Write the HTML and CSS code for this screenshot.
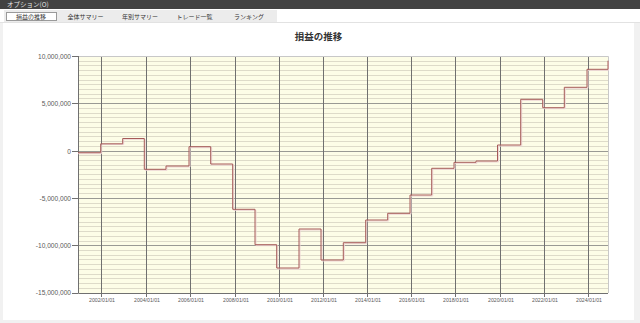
FILE: index.html
```html
<!DOCTYPE html>
<html lang="ja">
<head>
<meta charset="utf-8">
<title>損益の推移</title>
<link rel="stylesheet" href="styles.css">
</head>
<body>
<div class="titlebar">オプション(O)</div>
<div class="tabrow">
  <div class="tabstrip">
    <div class="tab active">損益の推移</div>
    <div class="tab">全体サマリー</div>
    <div class="tab">年別サマリー</div>
    <div class="tab">トレード一覧</div>
    <div class="tab">ランキング</div>
  </div>
</div>
<div class="frame">
  <div class="panel">
    <h1 class="chart-title">損益の推移</h1>
    <svg class="chart" width="631" height="276" viewBox="3 44 631 276" xmlns="http://www.w3.org/2000/svg">
      <rect x="78" y="56" width="530" height="237" fill="#fdfde7"/>
      <path fill="none" stroke="#dedbc9" stroke-width="1" d="M78 61.5H608M78 65.5H608M78 70.5H608M78 75.5H608M78 80.5H608M78 84.5H608M78 89.5H608M78 94.5H608M78 98.5H608M78 108.5H608M78 113.5H608M78 117.5H608M78 122.5H608M78 127.5H608M78 132.5H608M78 136.5H608M78 141.5H608M78 146.5H608M78 155.5H608M78 160.5H608M78 165.5H608M78 169.5H608M78 174.5H608M78 179.5H608M78 184.5H608M78 188.5H608M78 193.5H608M78 203.5H608M78 207.5H608M78 212.5H608M78 217.5H608M78 222.5H608M78 226.5H608M78 231.5H608M78 236.5H608M78 241.5H608M78 250.5H608M78 255.5H608M78 259.5H608M78 264.5H608M78 269.5H608M78 274.5H608M78 278.5H608M78 283.5H608M78 288.5H608"/>
      <path fill="none" stroke="#9a9a94" stroke-width="1" d="M78 103.5H608M78 151.5H608M78 198.5H608M78 245.5H608"/>
      <path fill="none" stroke="#707070" stroke-width="1" d="M101.5 56V297M146.5 56V297M190.5 56V297M235.5 56V297M279.5 56V297M323.5 56V297M367.5 56V297M411.5 56V297M455.5 56V297M500.5 56V297M544.5 56V297M588.5 56V297"/>
      <path fill="none" stroke="#c8c8c8" stroke-width="1" d="M78 56.5H608.5V293"/>
      <path fill="none" stroke="#707070" stroke-width="1" d="M78.5 56V293.5H608M72 56.5H78M72 103.5H78M72 151.5H78M72 198.5H78M72 245.5H78M72 293.5H78"/>
      <path fill="none" stroke="#eed6d6" stroke-width="1" d="M78 153.7H101.7V144.5H123.7V139.3H145.3V170.3H167V167H190V147.7H211.7V165H233.7V210.3H256V245.7H277.7V269H300V230H322V261H344.3V243.7H366.7V221H388.7V214.3H411V196H432.7V169.3H455V163.3H477V162H498.5V146H521.7V100.3H543.7V108.7H565.3V88.3H588V70.3H608.5V61.7"/>
      <path fill="none" stroke="#a65a58" stroke-width="1" d="M78 152.7H100.7V143.8H122.7V138.5H144.3V169.3H166V166H189V146.7H210.7V164H232.7V209.3H255V244.7H276.7V268H299V229H321V260H343.3V242.7H365.7V220H387.7V213.3H410V195H431.7V168.3H454V162.3H476V161H497.5V145H520.7V99.3H542.7V107.7H564.3V87.3H587V69.3H608V60.7"/>
      <g class="ylabels" text-anchor="end">
        <text x="71" y="58.8">10,000,000</text>
        <text x="71" y="105.8">5,000,000</text>
        <text x="71" y="153.8">0</text>
        <text x="71" y="200.8">-5,000,000</text>
        <text x="71" y="247.8">-10,000,000</text>
        <text x="71" y="295.3">-15,000,000</text>
      </g>
      <g class="xlabels" text-anchor="middle">
        <text x="102" y="301.5" textLength="26" lengthAdjust="spacingAndGlyphs">2002/01/01</text>
        <text x="147" y="301.5" textLength="26" lengthAdjust="spacingAndGlyphs">2004/01/01</text>
        <text x="191" y="301.5" textLength="26" lengthAdjust="spacingAndGlyphs">2006/01/01</text>
        <text x="236" y="301.5" textLength="26" lengthAdjust="spacingAndGlyphs">2008/01/01</text>
        <text x="280" y="301.5" textLength="26" lengthAdjust="spacingAndGlyphs">2010/01/01</text>
        <text x="324" y="301.5" textLength="26" lengthAdjust="spacingAndGlyphs">2012/01/01</text>
        <text x="368" y="301.5" textLength="26" lengthAdjust="spacingAndGlyphs">2014/01/01</text>
        <text x="412" y="301.5" textLength="26" lengthAdjust="spacingAndGlyphs">2016/01/01</text>
        <text x="456" y="301.5" textLength="26" lengthAdjust="spacingAndGlyphs">2018/01/01</text>
        <text x="501" y="301.5" textLength="26" lengthAdjust="spacingAndGlyphs">2020/01/01</text>
        <text x="545" y="301.5" textLength="26" lengthAdjust="spacingAndGlyphs">2022/01/01</text>
        <text x="589" y="301.5" textLength="26" lengthAdjust="spacingAndGlyphs">2024/01/01</text>
      </g>
    </svg>
  </div>
</div>
</body>
</html>
```

FILE: styles.css
```css
html, body {
  margin: 0;
  padding: 0;
}
body {
  width: 640px;
  height: 323px;
  overflow: hidden;
  background: #f1f1f1;
  font-family: "Noto Sans CJK JP", "Noto Sans", sans-serif;
}
.titlebar {
  height: 9px;
  line-height: 9px;
  background: #424242;
  color: #e4e4e4;
  font-size: 6.5px;
  padding-left: 7px;
  white-space: nowrap;
}
.tabrow {
  height: 13px;
  background: #ffffff;
  padding-top: 1px;
  box-sizing: border-box;
}
.tabstrip {
  display: flex;
  gap: 3.5px;
  width: 273px;
  height: 12px;
  margin-left: 4px;
  padding: 2px 0 0 1.5px;
  box-sizing: border-box;
  background: #ececec;
}
.tab {
  width: 51px;
  height: 9px;
  line-height: 9px;
  font-size: 6px;
  color: #333333;
  text-align: center;
  white-space: nowrap;
  box-sizing: border-box;
}
.tab.active {
  background: #ffffff;
  border: 1px solid #9a9a9a;
  line-height: 7px;
}
.frame {
  padding: 0 6px 3px 3px;
  border-top: 1px solid #e2e2e2;
}
.panel {
  width: 631px;
  height: 297px;
  background: #ffffff;
  overflow: hidden;
}
.chart-title {
  margin: 0;
  padding-top: 7px;
  height: 13px;
  padding-bottom: 1px;
  line-height: 13px;
  font-size: 9.5px;
  font-weight: bold;
  color: #333333;
  text-align: center;
}
.chart {
  display: block;
}
.ylabels text {
  font-family: "Liberation Sans", Arial, sans-serif;
  font-size: 6.6px;
  fill: #5a5a5a;
}
.xlabels text {
  font-family: "Liberation Sans", Arial, sans-serif;
  font-size: 6px;
  fill: #5a5a5a;
}
```
